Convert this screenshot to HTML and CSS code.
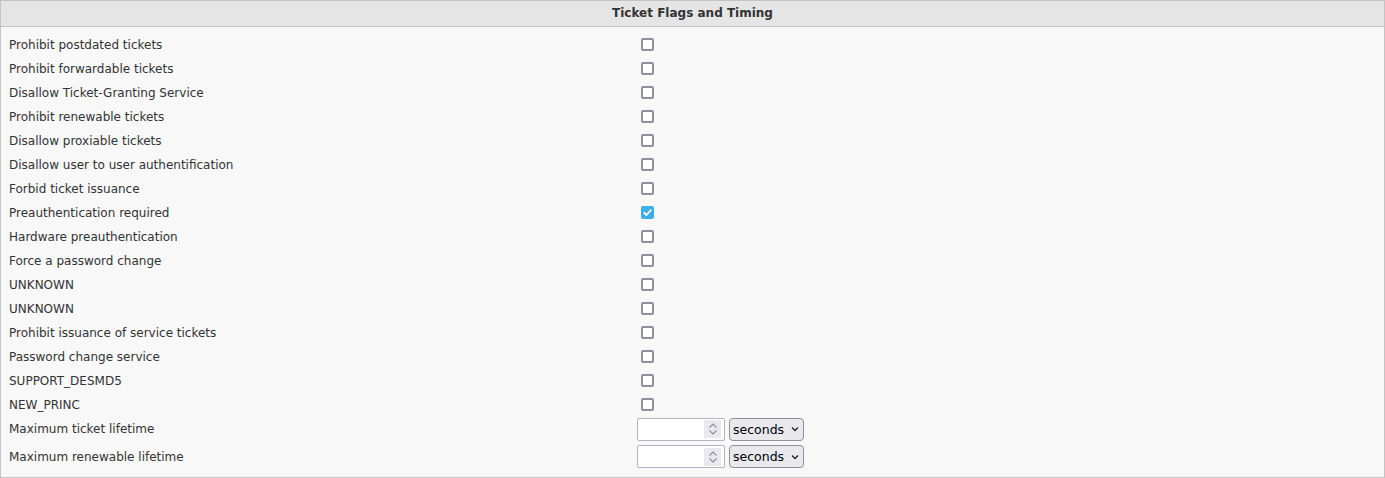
FILE: index.html
```html
<!DOCTYPE html>
<html>
<head>
<meta charset="utf-8">
<link rel="stylesheet" href="styles.css">
</head>
<body>
<div class="panel">
  <div class="panel-head">Ticket Flags and Timing</div>
  <div class="panel-body">
    <div class="row"><span class="label">Prohibit postdated tickets</span><span class="cell"><span class="cb"></span></span></div>
    <div class="row"><span class="label">Prohibit forwardable tickets</span><span class="cell"><span class="cb"></span></span></div>
    <div class="row"><span class="label">Disallow Ticket-Granting Service</span><span class="cell"><span class="cb"></span></span></div>
    <div class="row"><span class="label">Prohibit renewable tickets</span><span class="cell"><span class="cb"></span></span></div>
    <div class="row"><span class="label">Disallow proxiable tickets</span><span class="cell"><span class="cb"></span></span></div>
    <div class="row"><span class="label">Disallow user to user authentification</span><span class="cell"><span class="cb"></span></span></div>
    <div class="row"><span class="label">Forbid ticket issuance</span><span class="cell"><span class="cb"></span></span></div>
    <div class="row"><span class="label">Preauthentication required</span><span class="cell"><span class="cb checked"><svg width="13" height="13" viewBox="0 0 13 13"><path d="M3.3 6.8 L5.5 9 L9.8 4.2" fill="none" stroke="#fff" stroke-width="1.8" stroke-linecap="round" stroke-linejoin="round"/></svg></span></span></div>
    <div class="row"><span class="label">Hardware preauthentication</span><span class="cell"><span class="cb"></span></span></div>
    <div class="row"><span class="label">Force a password change</span><span class="cell"><span class="cb"></span></span></div>
    <div class="row"><span class="label">UNKNOWN</span><span class="cell"><span class="cb"></span></span></div>
    <div class="row"><span class="label">UNKNOWN</span><span class="cell"><span class="cb"></span></span></div>
    <div class="row"><span class="label">Prohibit issuance of service tickets</span><span class="cell"><span class="cb"></span></span></div>
    <div class="row"><span class="label">Password change service</span><span class="cell"><span class="cb"></span></span></div>
    <div class="row"><span class="label">SUPPORT_DESMD5</span><span class="cell"><span class="cb"></span></span></div>
    <div class="row"><span class="label">NEW_PRINC</span><span class="cell"><span class="cb"></span></span></div>
    <div class="row tall first-tall"><span class="label">Maximum ticket lifetime</span><span class="cell">
      <span class="num"><input class="num-input" type="text"><span class="spin"><svg width="12" height="18" viewBox="0 0 12 18"><path d="M2.5 7.5 L6 4 L9.5 7.5" fill="none" stroke="#8a8a94" stroke-width="1.1"/><path d="M2.5 10.5 L6 14 L9.5 10.5" fill="none" stroke="#8a8a94" stroke-width="1.1"/></svg></span></span>
      <span class="sel">seconds<svg width="8" height="6" viewBox="0 0 8 6"><path d="M1 1.5 L4 4.5 L7 1.5" fill="none" stroke="#222" stroke-width="1.3"/></svg></span>
    </span></div>
    <div class="row tall last"><span class="label">Maximum renewable lifetime</span><span class="cell">
      <span class="num"><input class="num-input" type="text"><span class="spin"><svg width="12" height="18" viewBox="0 0 12 18"><path d="M2.5 7.5 L6 4 L9.5 7.5" fill="none" stroke="#8a8a94" stroke-width="1.1"/><path d="M2.5 10.5 L6 14 L9.5 10.5" fill="none" stroke="#8a8a94" stroke-width="1.1"/></svg></span></span>
      <span class="sel">seconds<svg width="8" height="6" viewBox="0 0 8 6"><path d="M1 1.5 L4 4.5 L7 1.5" fill="none" stroke="#222" stroke-width="1.3"/></svg></span>
    </span></div>
  </div>
</div>
</body>
</html>
```
FILE: styles.css
```css
html, body { margin: 0; padding: 0; background: #ffffff; }
body { font-family: "DejaVu Sans", sans-serif; font-size: 12px; color: #333; }
.panel {
  width: 1385px; height: 478px; box-sizing: border-box;
  border: 1px solid #c4c4c4; background: #f8f8f8;
  display: flex; flex-direction: column;
}
.panel-head {
  height: 26px; box-sizing: border-box; border-bottom: 1px solid #c4c4c4;
  background: #e5e5e5; font-weight: bold; text-align: center;
  line-height: 25px; color: #333; font-size: 12px;
}
.panel-body { padding: 6px 0 0 8px; }
.row { display: flex; align-items: center; height: 24px; }
.row.tall { height: 26px; }
.row.first-tall { margin-top: -1px; }
.row.last { height: 27px; margin-top: 1px; }
.label { width: 628px; flex: none; white-space: nowrap; }
.cell { display: flex; align-items: center; gap: 4px; }
.cb {
  width: 13px; height: 13px; box-sizing: border-box; margin: 0 0 2px 4px;
  border: 2px solid #8f8f9d; border-radius: 2px; background: #fff;
  display: block;
}
.cb.checked { border: none; background: #3daee9; }
.cb.checked svg { display: block; }
.num {
  display: flex; align-items: center; width: 88px; height: 23px; box-sizing: border-box;
  border: 1px solid #b4b4bc; border-radius: 2px; background: #fff; padding-right: 3px;
}
.num-input { flex: 1; min-width: 0; border: none; outline: none; background: transparent; height: 19px; padding: 0 2px; }
.spin { width: 17px; height: 18px; background: #e9e9ed; display: flex; align-items: center; justify-content: center; }
.spin svg { display: block; }
.sel {
  display: flex; align-items: center; gap: 7px; height: 23px; box-sizing: border-box;
  width: 75px; padding: 0 0 0 3px;
  border: 1px solid #8f8f9d; border-radius: 4px; background: #e9e9ed; color: #000; font-size: 12.5px;
}
.sel svg { display: block; }
```
